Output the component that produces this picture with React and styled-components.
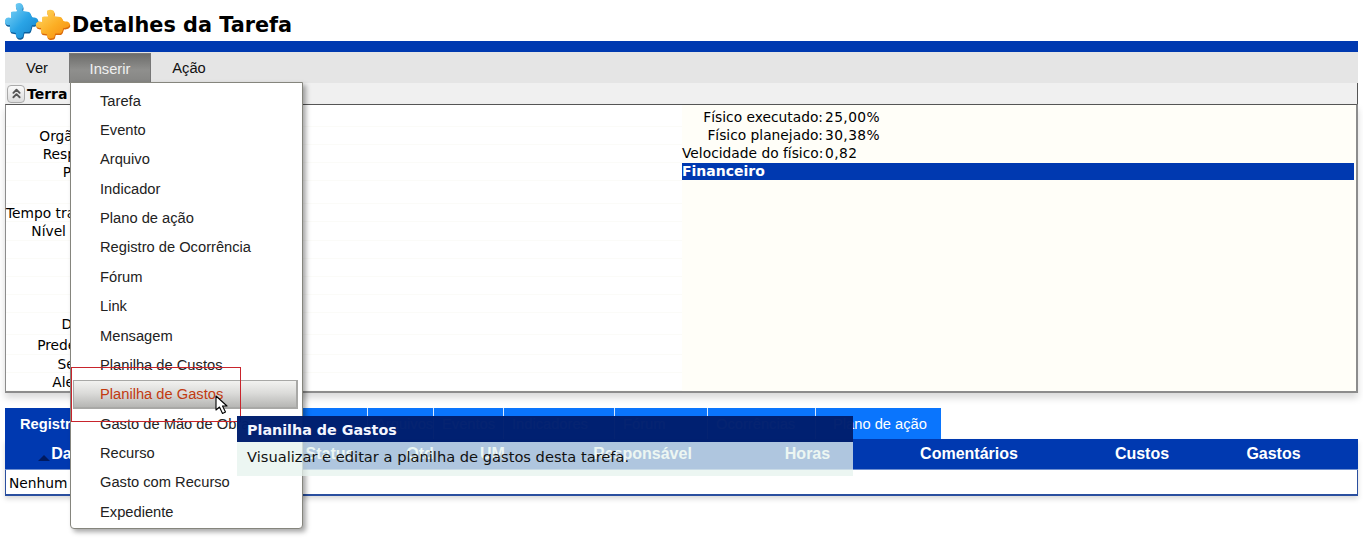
import React from 'react';
import styled, { createGlobalStyle } from 'styled-components';
import { ChevronsUp } from 'lucide-react';

const Global = createGlobalStyle`
html, body {
  margin: 0;
  background: #fff;
}
#root {
  width: 1363px;
  height: 549px;
  overflow: hidden;
}
`;

const Page = styled.div`
position: relative;
padding: 0 5px;
height: 549px;
box-sizing: border-box;
font-family: "DejaVu Sans", Verdana, sans-serif;
color: #000;
`;

const TitleRow = styled.div`
height: 41px;
display: flex;
align-items: flex-end;
`;

const Logo = styled.svg`
width: 67px;
height: 40px;
flex: none;
`;

const Title = styled.h1`
margin: 0 0 3px 0;
font-size: 20.8px;
line-height: 26px;
font-weight: bold;
`;

const BlueBar = styled.div`
height: 11px;
background: #0039b0;
`;

const MenuBar = styled.div`
position: relative;
height: 31px;
background: #e5e5e5;
display: flex;
font-family: "Liberation Sans", Arial, sans-serif;
font-size: 14.7px;
`;

const MenuItem = styled.div`
width: ${p => p.$w}px;
display: flex;
align-items: center;
justify-content: center;
box-sizing: border-box;
color: ${p => (p.$open ? '#f0f0f0' : '#111')};
background: ${p => (p.$open ? 'linear-gradient(#6d6d6b, #8f8f8d 55%, #858583)' : 'none')};
border: ${p => (p.$open ? '1px solid #777' : 'none')};
border-bottom: none;
margin-top: ${p => (p.$open ? 1 : 0)}px;
`;

const Dropdown = styled.div`
position: absolute;
z-index: 5;
top: 30px;
left: 65px;
width: 233px;
height: 447px;
box-sizing: border-box;
padding: 3px 0 0;
background: #fff;
border: 1px solid #85857d;
border-radius: 0 0 4px 4px;
box-shadow: 3px 3px 5px rgba(0, 0, 0, .35);
`;

const DropItem = styled.div`
height: 29.36px;
box-sizing: border-box;
display: flex;
align-items: center;
padding-left: 29px;
margin: ${p => (p.$active ? '0 4px 0 2px' : '0')};
font-size: 14.7px;
white-space: nowrap;
overflow: hidden;
color: ${p => (p.$active ? '#c23a10' : '#222')};
${p => p.$active && `
  padding-left: 26px;
  background: linear-gradient(#f2f2f0, #dcdcda 45%, #b6b6b4);
  border: 2px solid #a8a8a6;
  border-width: 1px 2px 2px 1px;
`}
`;

const RedBox = styled.div`
position: absolute;
top: 284px;
left: 0;
width: 170px;
height: 55px;
box-sizing: border-box;
border: 1px solid #c8242c;
pointer-events: none;
`;

const Cursor = styled.svg`
position: absolute;
top: 312px;
left: 144px;
width: 15px;
height: 20px;
`;

const Strip = styled.div`
height: 21px;
background: #f0f0f0;
display: flex;
align-items: center;
padding-left: 2px;
border-right: 1px solid #555;
box-sizing: border-box;
`;

const Collapse = styled.button`
width: 18px;
height: 18px;
padding: 0;
margin-right: 2px;
display: flex;
align-items: center;
justify-content: center;
background: linear-gradient(#fafafa, #dcdcdc);
border: 1px solid #aaa;
border-radius: 4px;
color: #555;
`;

const StripTitle = styled.b`
font-size: 14px;
`;

const Panel = styled.div`
height: 289px;
box-sizing: border-box;
display: grid;
grid-template-columns: 676px 1fr;
border-top: 1px solid #555;
border-left: 1px solid #8c8c8c;
border-right: 2px solid #8c8c8c;
border-bottom: 2px solid #8c8c8c;
box-shadow: 0 5px 7px rgba(0, 0, 0, .15);
font-size: 13.8px;
background: #fff;
`;

const LeftCol = styled.div`
display: flex;
flex-direction: column;
padding-top: 4px;
`;

const LabelRow = styled.div`
height: ${p => p.$h || 18}px;
flex: none;
box-sizing: border-box;
display: flex;
align-items: center;
border-bottom: 1px solid #fbfbf8;
`;

const Label = styled.span`
width: 128px;
text-align: right;
white-space: nowrap;
`;

const RightCol = styled.div`
background: #fffef8;
padding-top: 3px;
`;

const StatRow = styled.div`
height: 18px;
display: grid;
grid-template-columns: 141px 1fr;
align-items: center;
`;

const StatLabel = styled.span`
text-align: right;
white-space: nowrap;
`;

const StatValue = styled.span`
padding-left: 2px;
letter-spacing: .4px;
`;

const Section = styled.div`
height: 17px;
margin: 1px 2px 0 0;
background: #0039b0;
color: #fff;
font-weight: bold;
font-size: 14px;
line-height: 17px;
`;

const Tabs = styled.div`
display: flex;
margin-top: 15px;
height: 31px;
font-family: "Liberation Sans", Arial, sans-serif;
font-size: 14.7px;
color: #fff;
`;

const Tab = styled.div`
width: ${p => p.$w}px;
box-sizing: border-box;
display: flex;
align-items: center;
padding-left: ${p => p.$pad || 8}px;
white-space: nowrap;
overflow: hidden;
background: ${p => (p.$active ? '#0039b0' : '#0a75fd')};
font-weight: ${p => (p.$active ? 'bold' : 'normal')};
border-right: ${p => (p.$last ? 'none' : '1px solid #d8e8ff')};
${p => p.$active && 'border-right: none;'}
`;

const Table = styled.div`
border: solid #2a4f9f;
border-width: 0 1px 2px 1px;
box-shadow: 0 3px 5px rgba(0, 0, 0, .15);
`;

const HeadRow = styled.div`
height: 31px;
display: grid;
grid-template-columns: 114px 161px 100px 80px 65px 235px 95px 228px 118px 145px 1fr;
background: #0039b0;
border-bottom: 1px solid #6f8fd0;
box-sizing: border-box;
margin: 0 -1px;
font-family: "Liberation Sans", Arial, sans-serif;
font-size: 16px;
font-weight: bold;
color: #fff;
`;

const HeadCell = styled.div`
display: flex;
align-items: center;
justify-content: center;
white-space: nowrap;
`;

const SortMark = styled.i`
width: 0;
height: 0;
margin: 8px 1px 0 0;
border-left: 6px solid transparent;
border-right: 6px solid transparent;
border-bottom: 6px solid #001a60;
`;

const EmptyRow = styled.div`
height: 24px;
padding-left: 3px;
font-size: 13.8px;
line-height: 27px;
background: #fff;
`;

const Tooltip = styled.div`
position: absolute;
z-index: 6;
top: 416px;
left: 237px;
width: 616px;
font-size: 14.3px;
`;

const TipHead = styled.div`
height: 26px;
padding-left: 10px;
line-height: 29px;
font-weight: bold;
color: #f4f6ff;
background: rgba(0, 31, 110, .98);
`;

const TipBody = styled.div`
height: 34px;
padding-left: 10px;
line-height: 29px;
font-size: 14.65px;
color: #111;
background: rgba(230, 243, 238, .76);
`;

const leftRows = [
  ['', 18], ['Orgão gestor:', 18], ['Responsável:', 18], ['Programa:', 18], ['', 23],
  ['Tempo trabalhado:', 18], ['Nível de custo:', 19], ['', 18], ['', 18], ['', 18], ['', 18],
  ['Descrição:', 22], ['Predecessora:', 20], ['Sequência:', 18], ['Alerta para:', 18],
];

const menuItems = [
  'Tarefa', 'Evento', 'Arquivo', 'Indicador', 'Plano de ação', 'Registro de Ocorrência', 'Fórum', 'Link',
  'Mensagem', 'Planilha de Custos', 'Planilha de Gastos', 'Gasto de Mão de Obra', 'Recurso',
  'Gasto com Recurso', 'Expediente',
];

const tabs = [
  ['Registro de Horas', 151, 15], ['Log', 212], ['Arquivos', 66], ['Eventos', 70], ['Indicadores', 111],
  ['Fórum', 93], ['Ocorrências', 108], ['Plano de ação', 125, 17],
];

const headCols = ['Data', 'Tarefa', 'Status', 'Qtd', 'UM', 'Responsável', 'Horas', 'Comentários', 'Custos', 'Gastos'];

function Puzzles() {
  const piece = 'M11 3 c3-2 7-1 7 3 c0 2-1 3 0 4 l6 1 c2 1 2 4 3 5 c2 1 5 0 6 3 c1 4-4 6-6 5 c-1 3-1 6-3 7 l-5 0 c-1 2 0 5-3 6 c-4 1-6-2-5-5 l-5-1 c-2-2-1-5-1-7 c-3 1-6-1-5-5 c1-3 4-3 6-2 l0-6 c3-1 5 0 6-1 c0-2-2-4-1-7z';
  return (
    <Logo viewBox="0 0 67 40">
      <defs>
        <linearGradient id="bl" x1="0" y1="0" x2="1" y2="1">
          <stop offset="0" stopColor="#8fdcf8" />
          <stop offset=".55" stopColor="#2aa4e6" />
          <stop offset="1" stopColor="#1682c8" />
        </linearGradient>
        <linearGradient id="or" x1="0" y1="0" x2="1" y2="1">
          <stop offset="0" stopColor="#ffdc6a" />
          <stop offset=".55" stopColor="#fcae24" />
          <stop offset="1" stopColor="#f58a12" />
        </linearGradient>
      </defs>
      <path d={piece} fill="#0c5f9c" transform="translate(.5 1.5)" />
      <path d={piece} fill="url(#bl)" />
      <path d={piece} fill="#d96a0a" transform="translate(31.5 8.5) scale(1.02 .82)" />
      <path d={piece} fill="url(#or)" transform="translate(31 7) scale(1.02 .82)" />
    </Logo>
  );
}

function App() {
  return (
    <Page>
      <Global />
      <TitleRow>
        <Puzzles />
        <Title>Detalhes da Tarefa</Title>
      </TitleRow>
      <BlueBar />
      <MenuBar>
        <MenuItem $w={64}>Ver</MenuItem>
        <MenuItem $w={82} $open>Inserir</MenuItem>
        <MenuItem $w={76}>Ação</MenuItem>
        <Dropdown>
          {menuItems.map(m => (
            <DropItem key={m} $active={m === 'Planilha de Gastos'}>{m}</DropItem>
          ))}
          <RedBox />
          <Cursor viewBox="0 0 15 20">
            <path d="M1 1 L1 15 L4.5 12 L7.5 18.5 L10.5 17 L7.5 11 L12 11 Z" fill="#fff" stroke="#000" strokeWidth="1.1" strokeLinejoin="round" />
          </Cursor>
        </Dropdown>
      </MenuBar>
      <Strip>
        <Collapse><ChevronsUp size={15} strokeWidth={3} /></Collapse>
        <StripTitle>Terra e Obras</StripTitle>
      </Strip>
      <Panel>
        <LeftCol>
          {leftRows.map(([text, h], i) => (
            <LabelRow key={i} $h={h}><Label>{text}</Label></LabelRow>
          ))}
        </LeftCol>
        <RightCol>
          <StatRow><StatLabel>Físico executado:</StatLabel><StatValue>25,00%</StatValue></StatRow>
          <StatRow><StatLabel>Físico planejado:</StatLabel><StatValue>30,38%</StatValue></StatRow>
          <StatRow><StatLabel>Velocidade do físico:</StatLabel><StatValue>0,82</StatValue></StatRow>
          <Section>Financeiro</Section>
        </RightCol>
      </Panel>
      <Tabs>
        {tabs.map(([t, w, pad], i) => (
          <Tab key={t} $w={w} $pad={pad} $active={i === 0} $last={i === tabs.length - 1}>{t}</Tab>
        ))}
      </Tabs>
      <Table>
        <HeadRow>
          {headCols.map(c => (
            <HeadCell key={c}>{c === 'Data' && <SortMark />}{c}</HeadCell>
          ))}
        </HeadRow>
        <EmptyRow>Nenhum registro encontrado</EmptyRow>
      </Table>
      <Tooltip>
        <TipHead>Planilha de Gastos</TipHead>
        <TipBody>Visualizar e editar a planilha de gastos desta tarefa.</TipBody>
      </Tooltip>
    </Page>
  );
}

export default App;
